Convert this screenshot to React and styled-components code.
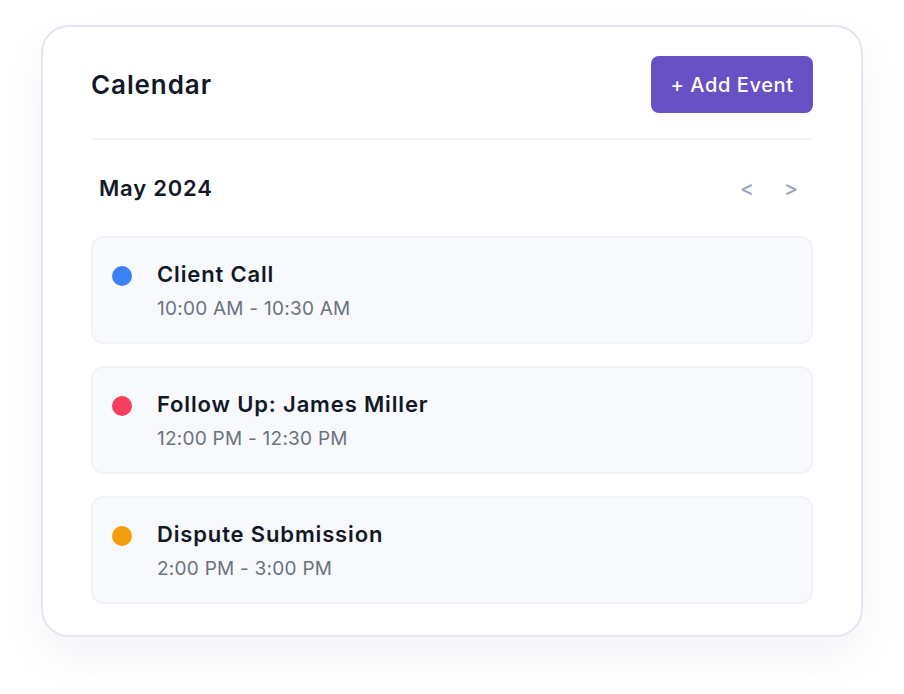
import React from "react";
import styled, { createGlobalStyle } from "styled-components";

const Global = createGlobalStyle`
  html, body { margin: 0; padding: 0; background: #ffffff; }
  body { font-family: Inter, "Noto Sans", sans-serif; -webkit-font-smoothing: antialiased; }
`;

const Page = styled.div`
  width: 904px;
  height: 694px;
  box-sizing: border-box;
  padding: 25px 41px 0 41px;
`;

const Card = styled.div`
  box-sizing: border-box;
  width: 822px;
  height: 612px;
  background: #ffffff;
  border: 2px solid #e3e6f1;
  border-radius: 28px;
  box-shadow: 0 20px 40px rgba(100, 110, 150, 0.08);
  padding: 29px 48px 30px 48px;
  display: flex;
  flex-direction: column;
`;

const Header = styled.div`
  display: flex;
  align-items: center;
  justify-content: space-between;
  padding-bottom: 25px;
  border-bottom: 2px solid #f1f4f8;
`;

const Title = styled.h2`
  margin: 0;
  font-size: 26px;
  font-weight: 600;
  color: #111827;
  letter-spacing: 0.9px;
`;

const AddButton = styled.button`
  width: 162px;
  height: 57px;
  border: none;
  border-radius: 8px;
  background: #6850c5;
  color: #ffffff;
  font-family: inherit;
  font-size: 20px;
  font-weight: 500;
  letter-spacing: 0.6px;
  cursor: pointer;
`;

const MonthRow = styled.div`
  display: flex;
  align-items: center;
  justify-content: space-between;
  padding: 0 8px;
  height: 96px;
`;

const Month = styled.div`
  font-size: 22px;
  font-weight: 600;
  color: #111827;
  letter-spacing: 0.8px;
`;

const Nav = styled.div`
  display: flex;
  gap: 30px;
  padding-right: 7px;
`;

const NavBtn = styled.span`
  font-size: 21px;
  font-weight: 500;
  color: #9da2c2;
  cursor: pointer;
`;

const List = styled.div`
  display: flex;
  flex-direction: column;
  gap: 22px;
`;

const Event = styled.div`
  box-sizing: border-box;
  height: 108px;
  background: #f8f9fc;
  border: 2px solid #f1f3f8;
  border-radius: 12px;
  display: flex;
  align-items: flex-start;
  padding: 22px 20px 0 19px;
  gap: 25px;
`;

const Dot = styled.span`
  width: 20px;
  height: 20px;
  border-radius: 50%;
  background: ${(p) => p.$color};
  margin-top: 6px;
  flex: none;
`;

const Info = styled.div`
  display: flex;
  flex-direction: column;
  gap: 8px;
`;

const EventTitle = styled.div`
  font-size: 22px;
  font-weight: 600;
  color: #111827;
  line-height: 28px;
  letter-spacing: 0.85px;
`;

const EventTime = styled.div`
  font-size: 19px;
  color: #6b7280;
  line-height: 26px;
  letter-spacing: 0.25px;
`;

const events = [
  { title: "Client Call", time: "10:00 AM - 10:30 AM", color: "#3b82f6" },
  { title: "Follow Up: James Miller", time: "12:00 PM - 12:30 PM", color: "#f43f5e" },
  { title: "Dispute Submission", time: "2:00 PM - 3:00 PM", color: "#f59e0b" },
];

export default function App() {
  return (
    <>
      <Global />
      <Page>
        <Card>
          <Header>
            <Title>Calendar</Title>
            <AddButton>+ Add Event</AddButton>
          </Header>
          <MonthRow>
            <Month>May 2024</Month>
            <Nav>
              <NavBtn>&lt;</NavBtn>
              <NavBtn>&gt;</NavBtn>
            </Nav>
          </MonthRow>
          <List>
            {events.map((e) => (
              <Event key={e.title}>
                <Dot $color={e.color} />
                <Info>
                  <EventTitle>{e.title}</EventTitle>
                  <EventTime>{e.time}</EventTime>
                </Info>
              </Event>
            ))}
          </List>
        </Card>
      </Page>
    </>
  );
}
